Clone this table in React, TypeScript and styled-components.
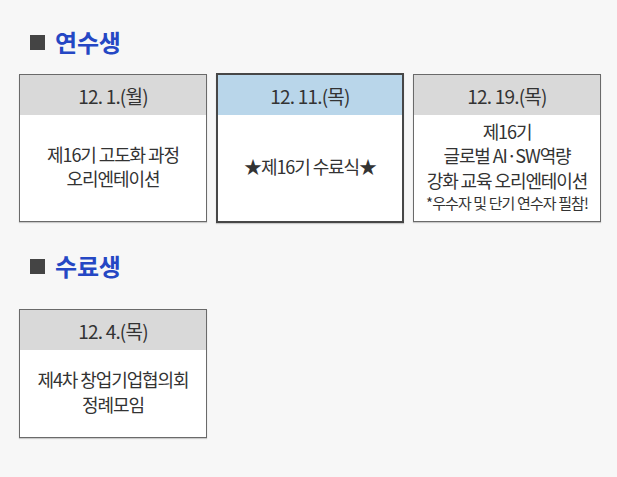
import { FC } from 'react';
import styled, { createGlobalStyle } from 'styled-components';

const GlobalStyle = createGlobalStyle`
  html, body {
    margin: 0;
    padding: 0;
    background: #f7f7f7;
  }
  body {
    font-family: "Noto Sans CJK KR", "Noto Sans", sans-serif;
    color: #333;
  }
`;

const Page = styled.div`
  width: 617px;
  min-height: 477px;
  padding: 28px 0 0 19px;
  box-sizing: border-box;
`;

const Section = styled.section<{ $gapTop: number; $gapBottom: number }>`
  margin-top: ${(p) => p.$gapTop}px;
  & > h2 {
    margin-bottom: ${(p) => p.$gapBottom}px;
  }
`;

const Title = styled.h2`
  display: flex;
  align-items: center;
  gap: 10px;
  margin: 0;
  padding-left: 11px;
  height: 28px;
  font-size: 24px;
  font-weight: 700;
  line-height: 28px;
  color: #2547c4;
  letter-spacing: -0.2px;

  &::before {
    content: '';
    width: 15px;
    height: 15px;
    background: #444;
    flex: none;
  }
`;

const Row = styled.div`
  display: grid;
  grid-template-columns: repeat(3, 188px);
  column-gap: 9px;
`;

const Card = styled.div<{ $active?: boolean; $height: number }>`
  display: flex;
  flex-direction: column;
  height: ${(p) => p.$height}px;
  box-sizing: border-box;
  background: #fff;
  border: ${(p) => (p.$active ? '2px solid #474747' : '1px solid #6a6a6a')};
  box-shadow: 0 1px 1px rgba(0, 0, 0, 0.18);
  margin-top: ${(p) => (p.$active ? '-1px' : '0')};
`;

const CardHead = styled.div<{ $active?: boolean }>`
  flex: none;
  height: 40px;
  display: flex;
  align-items: center;
  justify-content: center;
  background: ${(p) => (p.$active ? '#b9d6ea' : '#d9d9d9')};
  font-size: 19px;
  letter-spacing: -0.8px;
  color: #333;
`;

const CardBody = styled.div`
  flex: 1;
  display: flex;
  flex-direction: column;
  align-items: center;
  justify-content: center;
  padding-bottom: 4px;
  text-align: center;
  font-size: 18px;
  line-height: 24.5px;
  letter-spacing: -1.1px;
  color: #333;
`;

const Note = styled.span`
  font-size: 15px;
  line-height: 21px;
  letter-spacing: -0.9px;
`;

interface EventItem {
  date: string;
  lines: string[];
  note?: string;
  active?: boolean;
}

const trainees: EventItem[] = [
  { date: '12. 1.(월)', lines: ['제16기 고도화 과정', '오리엔테이션'] },
  { date: '12. 11.(목)', lines: ['★제16기 수료식★'], active: true },
  {
    date: '12. 19.(목)',
    lines: ['제16기', '글로벌 AI·SW역량', '강화 교육 오리엔테이션'],
    note: '*우수자 및 단기 연수자 필참!',
  },
];

const graduates: EventItem[] = [
  { date: '12. 4.(목)', lines: ['제4차 창업기업협의회', '정례모임'] },
];

const EventCard: FC<{ item: EventItem; height: number }> = ({ item, height }) => (
  <Card $active={item.active} $height={item.active ? height + 2 : height}>
    <CardHead $active={item.active}>{item.date}</CardHead>
    <CardBody>
      {item.lines.map((line) => (
        <div key={line}>{line}</div>
      ))}
      {item.note && <Note>{item.note}</Note>}
    </CardBody>
  </Card>
);

export default function App() {
  return (
    <>
      <GlobalStyle />
      <Page>
        <Section $gapTop={0} $gapBottom={18}>
          <Title>연수생</Title>
          <Row>
            {trainees.map((item) => (
              <EventCard key={item.date} item={item} height={148} />
            ))}
          </Row>
        </Section>
        <Section $gapTop={29} $gapBottom={29}>
          <Title>수료생</Title>
          <Row>
            {graduates.map((item) => (
              <EventCard key={item.date} item={item} height={129} />
            ))}
          </Row>
        </Section>
      </Page>
    </>
  );
}
